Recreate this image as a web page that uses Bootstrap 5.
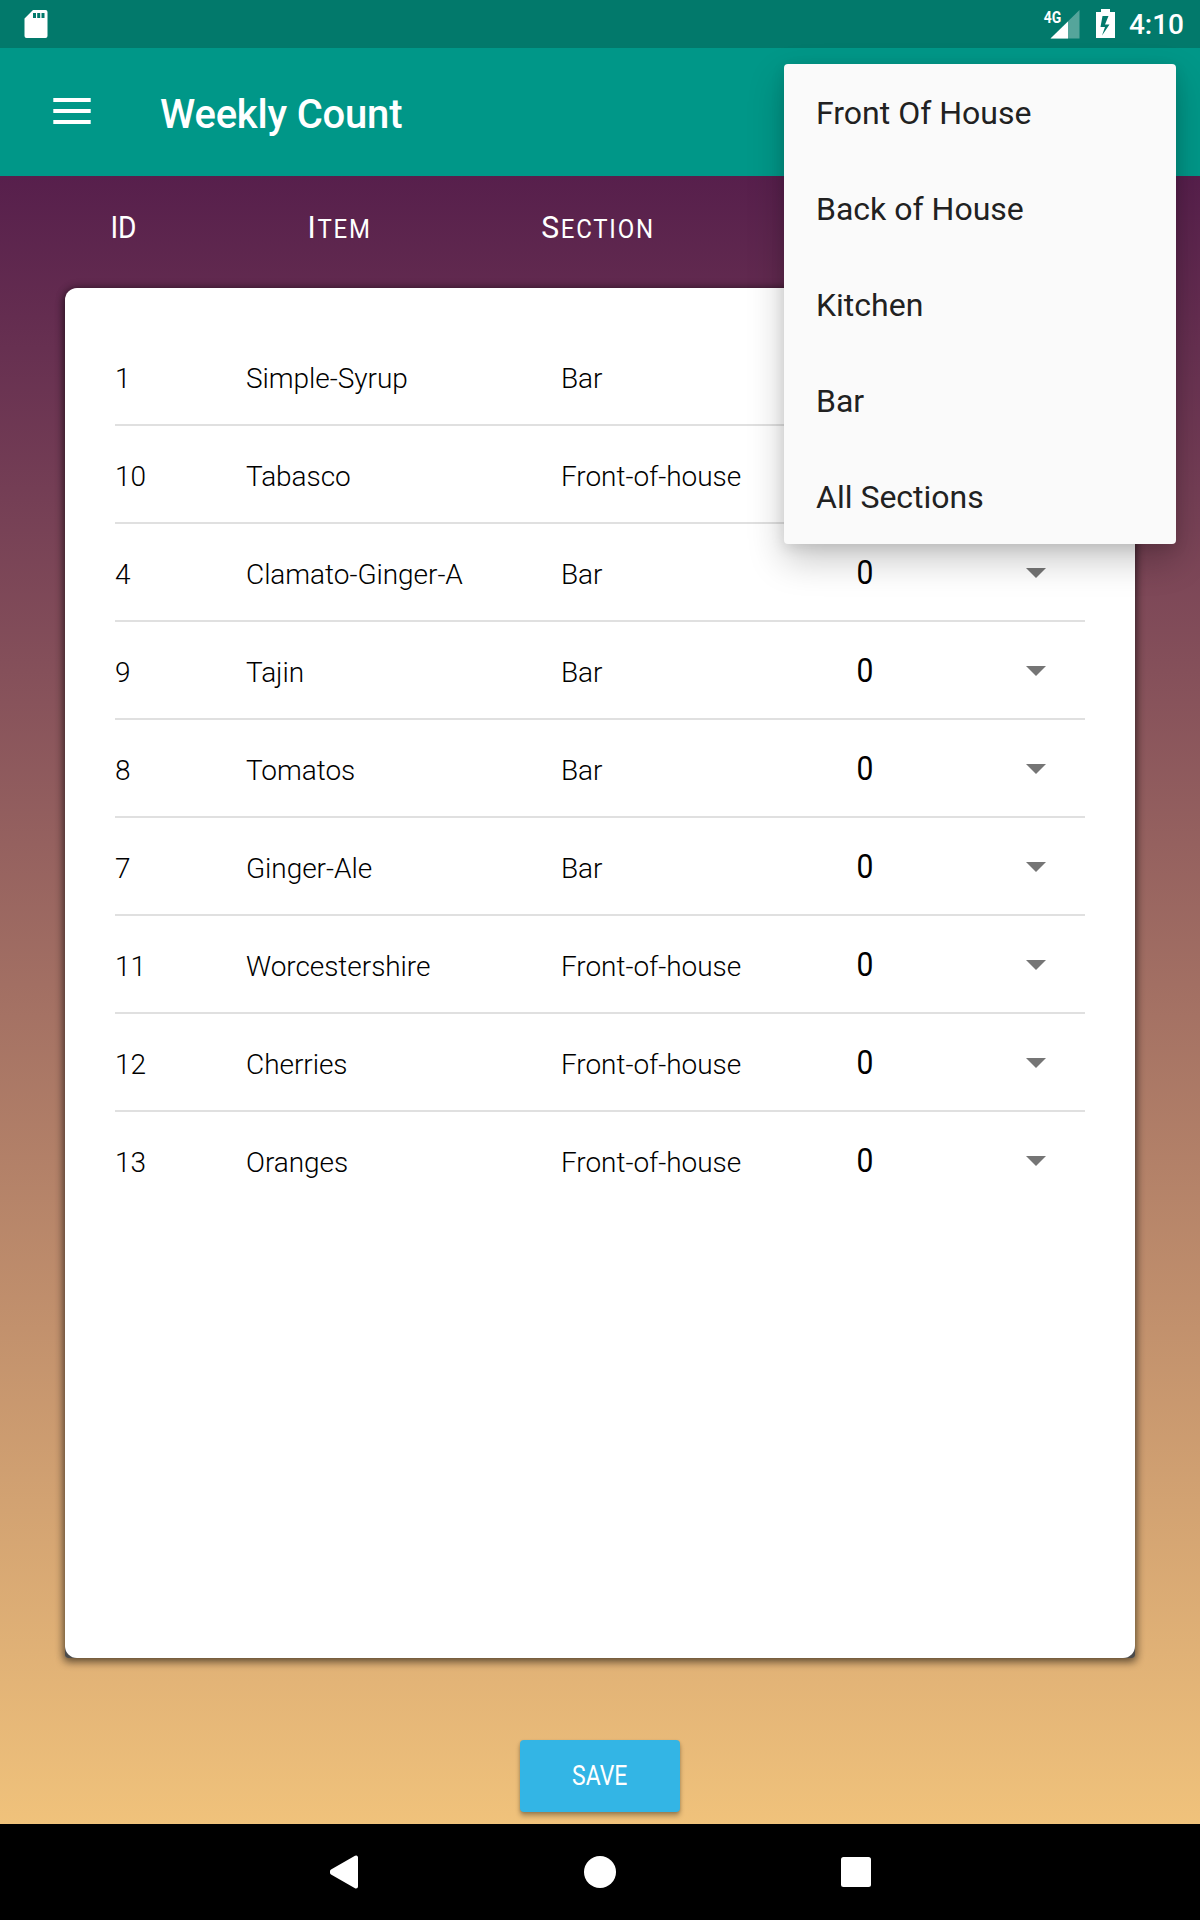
<!DOCTYPE html>
<html lang="en">
<head>
<meta charset="utf-8">
<meta name="viewport" content="width=device-width, initial-scale=1">
<title>Weekly Count</title>
<link href="https://cdn.jsdelivr.net/npm/bootstrap@5.3.0/dist/css/bootstrap.min.css" rel="stylesheet">
<style>
  body { font-family: Roboto, "Noto Sans", sans-serif; width: 1200px; height: 1920px; overflow: hidden; color: #000; }
  .status-bar { height: 48px; background: #02796b; font-size: 28px; font-weight: 500; line-height: 50px; padding: 0 16px 0 24px; }
  .app-bar { height: 128px; background: #009788; padding: 0 0 0 53px; }
  .menu-icon { margin-top: -2px; }
  .app-title { font-size: 40px; font-weight: 500; line-height: 48px; margin: 6px 0 0 69px; letter-spacing: -.2px; }
  .screen-body { height: 1648px; background: linear-gradient(#571f4c, #f0c27b); }
  .head-row { height: 112px; padding-left: 65px; font-size: 25.5px; line-height: 32px; letter-spacing: 1.9px; }
  .head-cell { text-transform: uppercase; text-align: center; padding-top: 35px; transform: scaleX(.94); }
  .head-cell::first-letter { font-size: 32px; }
  .h-id { width: 117px; font-size: 32px; letter-spacing: 0; transform: scaleX(.88); }
  .h-item { width: 315px; } .h-section { width: 202px; }
  .sheet-shadow { width: 1070px; height: 1370px; margin: 0 auto; border-radius: 12px 12px 3px 3px;
    background: linear-gradient(transparent 50%, #4b4b4b 50%); box-shadow: 0 3px 9px 1px rgba(0,0,0,.48), 0 0 10px rgba(0,0,0,.3); }
  .sheet { height: 100%; border-radius: 12px; padding: 40px 50px 0; }
  .count-row { height: 98px; border-bottom: 2px solid #e0e0e0; font-size: 28px; font-weight: 300; line-height: 32px; padding-top: 5px; letter-spacing: -.05px; }
  .count-row:last-child { border-color: transparent; }
  .c-id { width: 131px; } .c-item { width: 315px; } .c-section { width: 295px; }
  .c-qty { width: 170px; font-size: 32px; font-weight: 400; margin-top: -4px; }
  .qty-digit { display: inline-block; transform: scale(.94, 1.03); }
  .caret-icon { margin-top: -3px; }
  .save-btn { width: 160px; height: 72px; margin: 82px auto 0; background: #33b5e5; border-radius: 4px; color: #fff; font-size: 28px; font-weight: 400;
    box-shadow: 0 4px 5px rgba(0,0,0,.28), 0 1px 3px rgba(0,0,0,.15); border: 0; padding: 0; }
  .save-label { display: inline-block; transform: scaleX(.82); }
  .save-btn:hover { background: #33b5e5; color: #fff; }
  .section-menu { left: 784px; top: 64px; width: 392px; height: 480px; background: #fafafa; border-radius: 4px; z-index: 5;
    box-shadow: 0 16px 36px rgba(0,0,0,.22), 0 4px 14px rgba(0,0,0,.1); }
  .section-menu li { height: 96px; line-height: 98px; padding-left: 32px; font-size: 32px; color: #212121; }
  .nav-keys { height: 96px; background: #000; }
</style>
</head>
<body class="position-relative">
<header>
  <div class="status-bar d-flex justify-content-between text-white">
    <svg width="24" height="48" viewBox="0 0 24 48"><path fill="#fff" fill-rule="evenodd" d="M9 10h12.500a2 2 0 0 1 2 2v24a2 2 0 0 1-2 2h-19a2 2 0 0 1-2-2V18.500zM9 13v5h3v-5zM13.200 13v5h3v-5zM17.500 13v5h3v-5z"/></svg>
    <div class="d-flex">
      <svg width="74" height="48" viewBox="1043 0 74 48">
        <path d="M1079.500 10v28.500h-29z" fill="#fff" fill-opacity=".33"/><path d="M1068 21.500v17h-17.500z" fill="#fff"/>
        <text x="1043.700" y="22.600" font-family="Roboto" font-size="16.500" font-weight="700" fill="#fff" textLength="17.500" lengthAdjust="spacingAndGlyphs">4G</text>
        <path fill="#fff" fill-rule="evenodd" d="M1101 9h9v3h5v26h-19V12h5zM1102.500 16l-2 11h4.500l-3 8.500 7.500-11h-4.500l3.500-8.500z"/>
      </svg>
      <span class="ms-2 ps-1">4:10</span>
    </div>
  </div>
  <nav class="app-bar d-flex align-items-center text-white">
    <svg class="menu-icon" width="38" height="26" viewBox="0 0 38 26" fill="#fff"><path d="M.300 0h37.400v4H.300zM.300 11h37.400v4H.300zM.300 22h37.400v4H.300z"/></svg>
    <h1 class="app-title">Weekly Count</h1>
  </nav>
</header>
<main class="screen-body">
  <div class="head-row d-flex text-white">
    <div class="head-cell h-id">ID</div><div class="head-cell h-item">Item</div><div class="head-cell h-section">Section</div>
  </div>
  <div class="sheet-shadow">
    <div class="sheet bg-white">
      <div class="count-row d-flex align-items-center"><span class="c-id">1</span><span class="c-item">Simple-Syrup</span><span class="c-section">Bar</span></div>
      <div class="count-row d-flex align-items-center"><span class="c-id">10</span><span class="c-item">Tabasco</span><span class="c-section">Front-of-house</span></div>
      <div class="count-row d-flex align-items-center"><span class="c-id">4</span><span class="c-item">Clamato-Ginger-A</span><span class="c-section">Bar</span><span class="c-qty"><span class="qty-digit">0</span></span><svg class="caret-icon" width="20" height="10"><path d="M0 0h20L10 10z" fill="#757575"/></svg></div>
      <div class="count-row d-flex align-items-center"><span class="c-id">9</span><span class="c-item">Tajin</span><span class="c-section">Bar</span><span class="c-qty"><span class="qty-digit">0</span></span><svg class="caret-icon" width="20" height="10"><path d="M0 0h20L10 10z" fill="#757575"/></svg></div>
      <div class="count-row d-flex align-items-center"><span class="c-id">8</span><span class="c-item">Tomatos</span><span class="c-section">Bar</span><span class="c-qty"><span class="qty-digit">0</span></span><svg class="caret-icon" width="20" height="10"><path d="M0 0h20L10 10z" fill="#757575"/></svg></div>
      <div class="count-row d-flex align-items-center"><span class="c-id">7</span><span class="c-item">Ginger-Ale</span><span class="c-section">Bar</span><span class="c-qty"><span class="qty-digit">0</span></span><svg class="caret-icon" width="20" height="10"><path d="M0 0h20L10 10z" fill="#757575"/></svg></div>
      <div class="count-row d-flex align-items-center"><span class="c-id">11</span><span class="c-item">Worcestershire</span><span class="c-section">Front-of-house</span><span class="c-qty"><span class="qty-digit">0</span></span><svg class="caret-icon" width="20" height="10"><path d="M0 0h20L10 10z" fill="#757575"/></svg></div>
      <div class="count-row d-flex align-items-center"><span class="c-id">12</span><span class="c-item">Cherries</span><span class="c-section">Front-of-house</span><span class="c-qty"><span class="qty-digit">0</span></span><svg class="caret-icon" width="20" height="10"><path d="M0 0h20L10 10z" fill="#757575"/></svg></div>
      <div class="count-row d-flex align-items-center"><span class="c-id">13</span><span class="c-item">Oranges</span><span class="c-section">Front-of-house</span><span class="c-qty"><span class="qty-digit">0</span></span><svg class="caret-icon" width="20" height="10"><path d="M0 0h20L10 10z" fill="#757575"/></svg></div>
    </div>
  </div>
  <button class="btn save-btn d-block" type="button"><span class="save-label">SAVE</span></button>
</main>
<footer class="nav-keys">
  <svg class="d-block" width="1200" height="96" fill="#fff">
    <path d="M332 47.200L356 33.500V62.500L332 48.800z" stroke="#fff" stroke-width="4" stroke-linejoin="round"/>
    <circle cx="600" cy="48" r="16"/><rect x="841" y="33" width="30" height="30" rx="2.500"/>
  </svg>
</footer>
<ul class="section-menu list-unstyled position-absolute m-0">
  <li>Front Of House</li><li>Back of House</li><li>Kitchen</li><li>Bar</li><li>All Sections</li>
</ul>
<script src="https://cdn.jsdelivr.net/npm/bootstrap@5.3.0/dist/js/bootstrap.bundle.min.js"></script>
</body>
</html>
